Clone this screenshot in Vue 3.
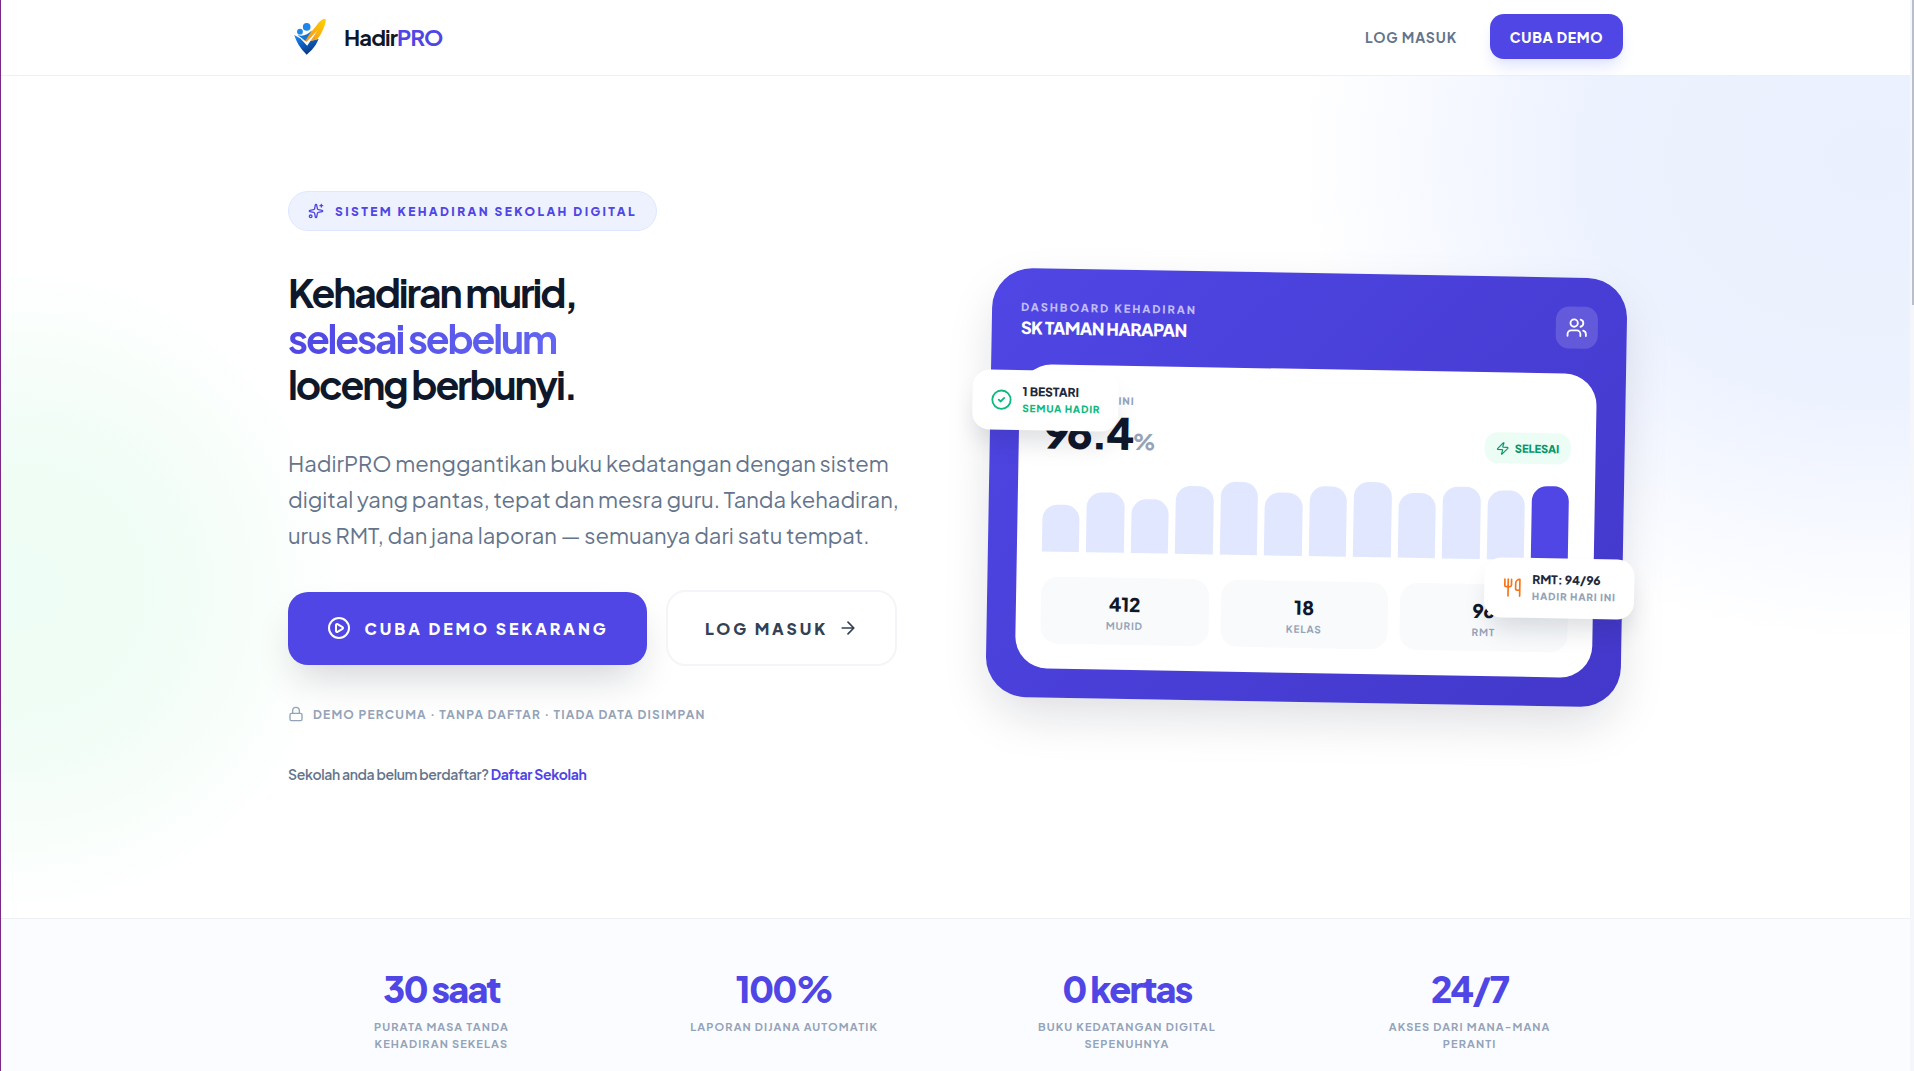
<script setup>
const bars = [60, 76, 68, 86, 93, 80, 88, 95, 82, 91, 87, 94]
const summary = [
  { value: '412', label: 'Murid' },
  { value: '18', label: 'Kelas' },
  { value: '96', label: 'RMT' },
]
const facts = [
  { value: '30 saat', label: 'Purata masa tanda kehadiran sekelas' },
  { value: '100%', label: 'Laporan dijana automatik' },
  { value: '0 kertas', label: 'Buku kedatangan digital sepenuhnya' },
  { value: '24/7', label: 'Akses dari mana-mana peranti' },
]
</script>

<template>
  <div class="page">
    <header class="nav">
      <div class="container nav-inner">
        <a class="brand" href="#">
          <svg class="logo" viewBox="0 0 48 48" aria-hidden="true">
            <defs>
              <linearGradient id="logo-blue" x1="0" y1="0" x2="0.6" y2="1">
                <stop offset="0" stop-color="#1c8df0" />
                <stop offset="0.5" stop-color="#0d5fc4" />
                <stop offset="1" stop-color="#0a3478" />
              </linearGradient>
              <linearGradient id="logo-gold" x1="1" y1="0" x2="0" y2="1">
                <stop offset="0" stop-color="#ffd400" />
                <stop offset="1" stop-color="#f58a1c" />
              </linearGradient>
            </defs>
            <path d="M6.500 22 L19 29 L32 26 L29 32 Q25 38 19.500 42.500 Q14 37 11 32 Q8 27 6.500 22Z" fill="url(#logo-blue)" />
            <path d="M15 24 Q24 20 29 13 Q34 5 39 5 Q40.500 7 37 15 Q33 25 29 27 L24 28 L18 30Z" fill="url(#logo-gold)" />
            <path d="M10 22 Q18 24.500 25 17 L18 28Z" fill="#1673d8" />
            <path d="M13 25.500 L19.500 29 L31 17 L20 33Z" fill="#fff" />
            <circle cx="19.500" cy="13.500" r="4" fill="#1c86ea" />
            <circle cx="12.500" cy="18.500" r="3" fill="#1c86ea" />
          </svg>
          <span class="wordmark">Hadir<span class="accent">PRO</span></span>
        </a>
        <nav class="nav-links">
          <a class="nav-login" href="#">Log masuk</a>
          <button class="nav-demo" type="button">Cuba demo</button>
        </nav>
      </div>
    </header>

    <main class="hero">
      <div class="container hero-grid">
        <section class="intro">
          <p class="eyebrow">
            <svg class="icon-16" viewBox="0 0 24 24" aria-hidden="true">
              <path d="M11.017 2.814a1 1 0 0 1 1.966 0l1.051 5.558a2 2 0 0 0 1.594 1.594l5.558 1.051a1 1 0 0 1 0 1.966l-5.558 1.051a2 2 0 0 0-1.594 1.594l-1.051 5.558a1 1 0 0 1-1.966 0l-1.051-5.558a2 2 0 0 0-1.594-1.594l-5.558-1.051a1 1 0 0 1 0-1.966l5.558-1.051a2 2 0 0 0 1.594-1.594z" />
              <path d="M20 2v4M22 4h-4" />
              <circle cx="4" cy="20" r="2" />
            </svg>
            Sistem kehadiran sekolah digital
          </p>
          <h1>
            Kehadiran murid,<br />
            <span class="gradient">selesai sebelum</span><br />
            loceng berbunyi.
          </h1>
          <p class="lead">
            HadirPRO menggantikan buku kedatangan dengan sistem<br />
            digital yang pantas, tepat dan mesra guru. Tanda kehadiran,<br />
            urus RMT, dan jana laporan — semuanya dari satu tempat.
          </p>
          <div class="actions">
            <button class="cta primary" type="button">
              <svg class="icon-24" viewBox="0 0 24 24" aria-hidden="true">
                <circle cx="12" cy="12" r="10" />
                <path d="M9 9.003a1 1 0 0 1 1.517-.859l4.997 2.997a1 1 0 0 1 0 1.718l-4.997 2.997A1 1 0 0 1 9 14.996z" />
              </svg>
              <span>Cuba demo sekarang</span>
            </button>
            <button class="cta secondary" type="button">
              <span>Log masuk</span>
              <svg class="icon-20" viewBox="0 0 24 24" aria-hidden="true">
                <path d="M5 12h14M12 5l7 7-7 7" />
              </svg>
            </button>
          </div>
          <p class="note">
            <svg class="icon-16" viewBox="0 0 24 24" aria-hidden="true">
              <rect x="3" y="11" width="18" height="11" rx="2" />
              <path d="M7 11V7a5 5 0 0 1 10 0v4" />
            </svg>
            Demo percuma · Tanpa daftar · Tiada data disimpan
          </p>
          <p class="register">Sekolah anda belum berdaftar? <a href="#">Daftar Sekolah</a></p>
        </section>

        <section class="board">
          <div class="board-head">
            <div>
              <p class="board-label">Dashboard kehadiran</p>
              <p class="board-title">SK TAMAN HARAPAN</p>
            </div>
            <span class="board-icon">
              <svg class="icon-22" viewBox="0 0 24 24" aria-hidden="true">
                <path d="M16 21v-2a4 4 0 0 0-4-4H6a4 4 0 0 0-4 4v2" />
                <circle cx="9" cy="7" r="4" />
                <path d="M22 21v-2a4 4 0 0 0-3-3.870M16 3.130a4 4 0 0 1 0 7.750" />
              </svg>
            </span>
          </div>
          <div class="panel">
            <div class="panel-head">
              <div>
                <p class="panel-label">Kadar hari ini</p>
                <p class="rate">96.4<span>%</span></p>
              </div>
              <span class="done">
                <svg class="icon-14" viewBox="0 0 24 24" aria-hidden="true">
                  <path d="M4 14a1 1 0 0 1-.780-1.630l9.900-10.200a.5.5 0 0 1 .860.460l-1.920 6.020A1 1 0 0 0 13 10h7a1 1 0 0 1 .780 1.630l-9.900 10.200a.5.5 0 0 1-.860-.460l1.920-6.020A1 1 0 0 0 11 14z" />
                </svg>
                Selesai
              </span>
            </div>
            <div class="chart">
              <i v-for="(h, i) in bars" :key="i" class="bar" :class="{ current: i === 11 }" :style="{ height: h + '%' }"></i>
            </div>
            <div class="summary">
              <div v-for="s in summary" :key="s.label" class="tile">
                <p class="tile-value">{{ s.value }}</p>
                <p class="tile-label">{{ s.label }}</p>
              </div>
            </div>
          </div>
          <div class="float float-class">
            <svg class="icon-22" viewBox="0 0 24 24" aria-hidden="true">
              <circle cx="12" cy="12" r="10" />
              <path d="M9 12l2 2 4-4" />
            </svg>
            <div>
              <p class="float-title">1 BESTARI</p>
              <p class="float-sub green">Semua hadir</p>
            </div>
          </div>
          <div class="float float-meal">
            <svg class="icon-20" viewBox="0 0 24 24" aria-hidden="true">
              <path d="M3 2v7c0 1.100.9 2 2 2h4a2 2 0 0 0 2-2V2M7 2v20M21 15V2a5 5 0 0 0-5 5v6c0 1.100.9 2 2 2h3zm0 0v7" />
            </svg>
            <div>
              <p class="float-title">RMT: 94/96</p>
              <p class="float-sub">Hadir hari ini</p>
            </div>
          </div>
        </section>
      </div>
    </main>

    <section class="facts">
      <div class="container facts-grid">
        <div v-for="f in facts" :key="f.value" class="fact">
          <p class="fact-value">{{ f.value }}</p>
          <p class="fact-label">{{ f.label }}</p>
        </div>
      </div>
    </section>
    <div class="scroll-thumb" aria-hidden="true"></div>
  </div>
</template>

<style>
body {
  background: #fff;
}
</style>

<style scoped>
.page {
  position: relative;
  box-sizing: border-box;
  min-height: 100vh;
  display: flex;
  flex-direction: column;
  border-left: 1px solid #7a2a86;
  border-right: 4px solid #f4f6fb;
  font-family: "Plus Jakarta Sans", Inter, "Liberation Sans", sans-serif;
  color: #0f172a;
}
.page * {
  box-sizing: border-box;
}
p,
h1 {
  margin: 0;
}
button {
  font-family: inherit;
  border: 0;
  cursor: pointer;
}
a {
  text-decoration: none;
}
svg {
  flex: none;
  fill: none;
  stroke: currentColor;
  stroke-width: 2;
  stroke-linecap: round;
  stroke-linejoin: round;
}
.icon-14 { width: 14px; height: 14px; }
.icon-16 { width: 16px; height: 16px; }
.icon-20 { width: 20px; height: 20px; }
.icon-22 { width: 22px; height: 22px; }
.icon-24 { width: 24px; height: 24px; }
.container {
  width: 100%;
  max-width: 1335px;
  margin: 0 auto;
}
.nav {
  position: relative;
  z-index: 1;
  background: #fff;
  padding-bottom: 2px;
  border-bottom: 1px solid #eef0f4;
}
.nav-inner {
  height: 73px;
  display: flex;
  align-items: center;
  justify-content: space-between;
}
.brand {
  display: flex;
  align-items: center;
  gap: 10px;
  color: #0f172a;
}
.logo {
  width: 46px;
  height: 46px;
  stroke: none;
}
.wordmark {
  font-size: 22px;
  font-weight: 700;
  letter-spacing: -0.04em;
}
.accent {
  color: #4f46e5;
}
.nav-links {
  display: flex;
  align-items: center;
  gap: 33px;
}
.nav-login {
  font-size: 14px;
  font-weight: 700;
  letter-spacing: 0.06em;
  text-transform: uppercase;
  color: #64748b;
}
.nav-demo {
  min-width: 133px;
  height: 45px;
  padding: 0 18px;
  border-radius: 14px;
  background: #4f46e5;
  color: #fff;
  font-size: 14px;
  font-weight: 800;
  letter-spacing: 0.05em;
  text-transform: uppercase;
  box-shadow: 0 10px 16px -3px #dfe4ff, 0 4px 6px -4px #dfe4ff;
}
.hero {
  padding: 115px 0 134px;
  background:
    radial-gradient(ellipse 570px 480px at 98% 10%, #ebf0fe 0%, #edf2ff 50%, #fff0 100%),
    radial-gradient(ellipse 330px 330px at 1% 61%, #eefdf5 0%, #f1fdf6 45%, #fff0 100%);
}
.hero-grid {
  display: grid;
  grid-template-columns: 1fr 1fr;
  gap: 66px;
  align-items: center;
}
.intro {
  display: flex;
  flex-direction: column;
  align-items: flex-start;
}
.eyebrow {
  display: flex;
  align-items: center;
  gap: 11px;
  height: 40px;
  padding: 0 19px;
  border: 1px solid #e0e7ff;
  border-radius: 20px;
  background: #eef2ff;
  color: #4f46e5;
  font-size: 12px;
  font-weight: 800;
  letter-spacing: 0.2em;
  text-transform: uppercase;
}
h1 {
  margin-top: 39px;
  font-size: 39px;
  line-height: 46px;
  font-weight: 700;
  letter-spacing: -0.055em;
}
.gradient {
  background: linear-gradient(90deg, #4f46e5, #6366f1);
  background-clip: text;
  color: transparent;
}
.lead {
  margin-top: 37px;
  font-size: 22px;
  line-height: 36px;
  color: #64748b;
  white-space: nowrap;
}
.actions {
  margin-top: 37px;
  display: flex;
  align-items: center;
  gap: 19px;
}
.cta {
  display: flex;
  align-items: center;
  justify-content: center;
  border-radius: 20px;
  font-size: 16px;
  letter-spacing: 0.18em;
  text-transform: uppercase;
  white-space: nowrap;
}
.primary {
  width: 359px;
  height: 73px;
  gap: 14px;
  background: #4f46e5;
  color: #fff;
  font-weight: 800;
  box-shadow: 0 20px 40px -10px #0f172a33;
}
.secondary {
  width: 231px;
  height: 76px;
  gap: 10px;
  background: #fff;
  border: 2px solid #f3f5f9;
  color: #334155;
  font-weight: 800;
}
.note {
  margin-top: 38px;
  display: flex;
  align-items: center;
  gap: 9px;
  height: 20px;
  font-size: 12px;
  font-weight: 700;
  letter-spacing: 0.1em;
  text-transform: uppercase;
  color: #94a3b8;
}
.register {
  margin-top: 40px;
  font-size: 14px;
  line-height: 20px;
  font-weight: 600;
  letter-spacing: -0.025em;
  color: #64748b;
}
.register a {
  font-weight: 700;
  color: #4f46e5;
}
.board {
  position: relative;
  padding: 29px;
  border-radius: 40px;
  background: linear-gradient(135deg, #4f46e5, #4338ca);
  transform: rotate(1deg);
  box-shadow: 0 20px 50px -6px #0f172a26;
}
.board-head {
  display: flex;
  align-items: flex-end;
  justify-content: space-between;
  height: 42px;
  margin-bottom: 25px;
}
.board-label {
  font-size: 11px;
  line-height: 16px;
  font-weight: 800;
  letter-spacing: 0.18em;
  text-transform: uppercase;
  color: #c0bdf6;
}
.board-title {
  font-size: 17px;
  line-height: 24px;
  font-weight: 800;
  letter-spacing: -0.03em;
  color: #fff;
}
.board-icon {
  display: grid;
  place-items: center;
  width: 42px;
  height: 42px;
  border-radius: 13px;
  background: #ffffff26;
  color: #fff;
}
.panel {
  padding: 25px;
  border-radius: 32px;
  background: #fff;
}
.panel-head {
  display: flex;
  align-items: flex-end;
  justify-content: space-between;
  height: 66px;
}
.panel-label {
  font-size: 10px;
  line-height: 16px;
  font-weight: 800;
  letter-spacing: 0.1em;
  text-transform: uppercase;
  color: #94a3b8;
}
.rate {
  margin-top: 8px;
  font-size: 43px;
  line-height: 32px;
  font-weight: 800;
  letter-spacing: -0.05em;
}
.rate span {
  font-size: 22px;
  font-weight: 800;
  color: #94a3b8;
}
.done {
  display: flex;
  align-items: center;
  gap: 5px;
  height: 31px;
  padding: 0 11px;
  border-radius: 13px;
  background: #ecfdf5;
  color: #059669;
  font-size: 11px;
  font-weight: 800;
  text-transform: uppercase;
}
.chart {
  display: flex;
  align-items: flex-end;
  gap: 7px;
  height: 79px;
  margin: 17px 0 25px;
}
.bar {
  flex: 1;
  border-radius: 15px 15px 0 0;
  background: #e0e7ff;
}
.bar.current {
  background: #4f46e5;
}
.summary {
  display: grid;
  grid-template-columns: repeat(3, 1fr);
  gap: 12px;
}
.tile {
  height: 67px;
  padding-top: 14px;
  border-radius: 17px;
  background: #f8fafc;
  text-align: center;
}
.tile-value {
  font-size: 19px;
  line-height: 24px;
  font-weight: 800;
}
.tile-label {
  font-size: 10px;
  line-height: 20px;
  font-weight: 700;
  letter-spacing: 0.08em;
  text-transform: uppercase;
  color: #94a3b8;
}
.float {
  position: absolute;
  display: flex;
  align-items: center;
  gap: 10px;
  height: 60px;
  padding: 0 18px;
  border-radius: 17px;
  background: #fff;
  box-shadow: 0 16px 26px -6px #0f172a26;
  white-space: nowrap;
}
.float-class {
  top: 102px;
  left: -18px;
  color: #10b981;
}
.float-meal {
  right: -12px;
  bottom: 88px;
  color: #f97316;
}
.float-title {
  font-size: 12px;
  line-height: 16px;
  font-weight: 800;
  color: #1e293b;
}
.float-sub {
  font-size: 10px;
  line-height: 16px;
  font-weight: 800;
  letter-spacing: 0.08em;
  text-transform: uppercase;
  color: #94a3b8;
}
.float-sub.green {
  color: #10b981;
}
.facts {
  flex: 1;
  padding: 49px 0 20px;
  border-top: 1px solid #eef0f4;
  background: #fafcff;
}
.facts-grid {
  display: grid;
  grid-template-columns: repeat(4, 1fr);
  gap: 36px;
}
.fact {
  display: flex;
  flex-direction: column;
  align-items: center;
  text-align: center;
}
.fact-value {
  font-size: 36px;
  line-height: 42px;
  font-weight: 800;
  letter-spacing: -0.05em;
  color: #4f46e5;
}
.fact-label {
  max-width: 204px;
  margin-top: 8px;
  font-size: 11px;
  line-height: 17px;
  font-weight: 700;
  letter-spacing: 0.1em;
  text-transform: uppercase;
  color: #94a3b8;
}
.scroll-thumb {
  position: absolute;
  z-index: 2;
  top: 0;
  right: -4px;
  width: 2px;
  height: 305px;
  background: #b9bfca;
}
</style>
